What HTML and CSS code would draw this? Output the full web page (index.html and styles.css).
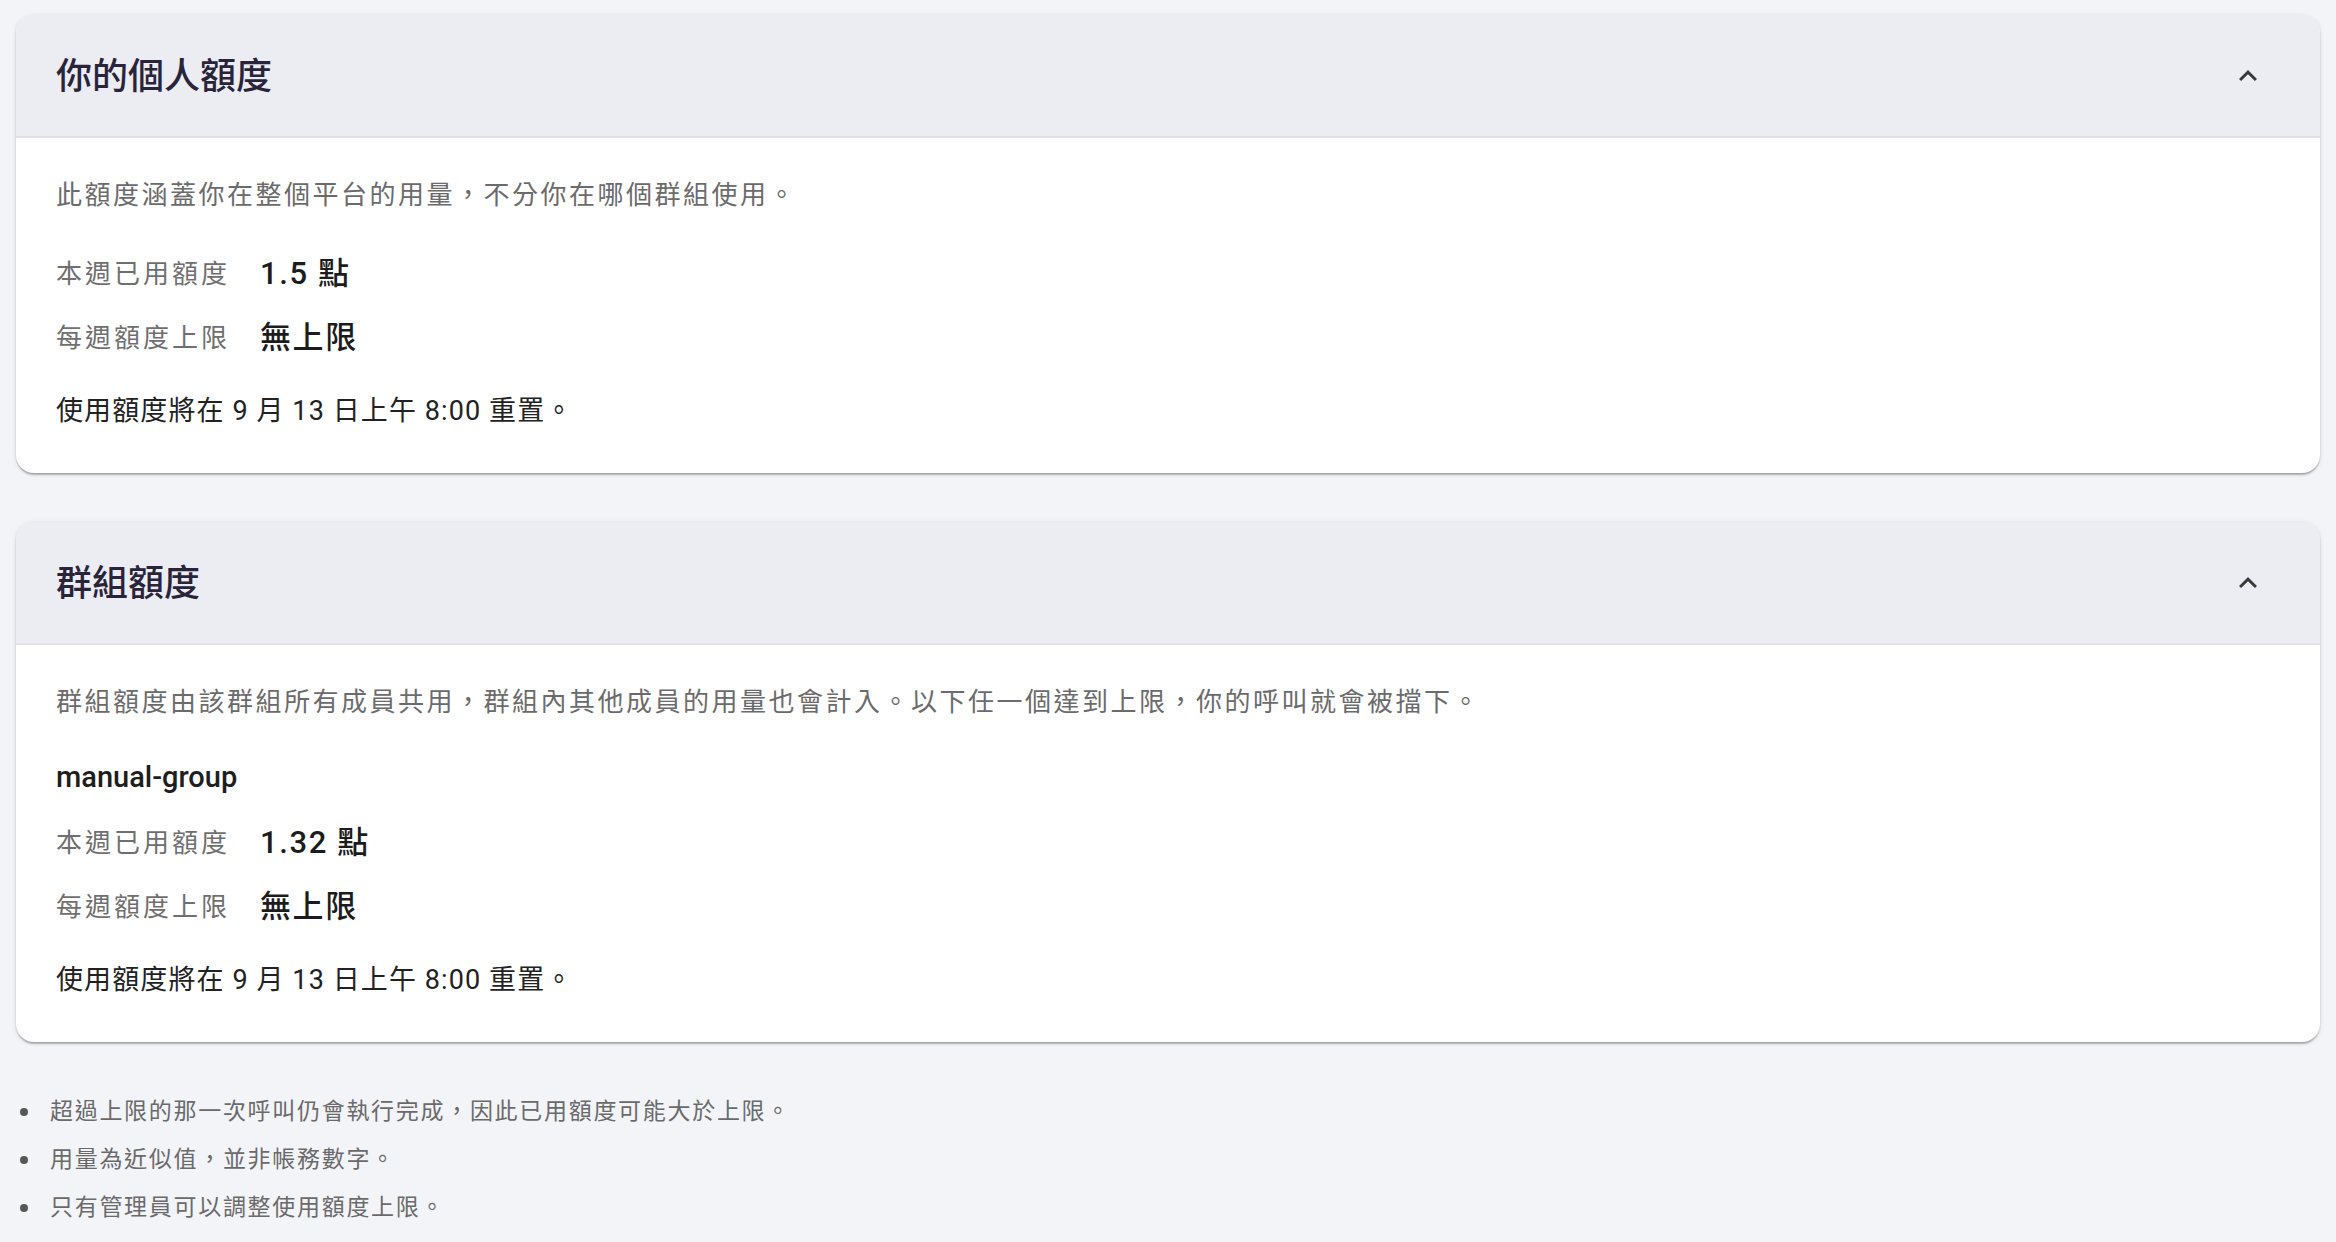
FILE: index.html
```html
<!DOCTYPE html>
<html>
<head>
  <title>額度</title>
  <link rel="stylesheet" href="styles.css">
</head>
<body>
  <!-- Personal quota -->
  <section class="quota-card">
    <div class="quota-header">
      <h2 class="quota-title">你的個人額度</h2>
      <svg class="chevron" viewBox="0 0 24 24"><path d="M12 8l-6 6 1.41 1.41L12 10.83l4.59 4.58L18 14z"/></svg>
    </div>
    <div class="quota-body">
      <p class="quota-desc">此額度涵蓋你在整個平台的用量，不分你在哪個群組使用。</p>
      <dl class="quota-stats">
        <dt>本週已用額度</dt>
        <dd>1.5 點</dd>
        <dt>每週額度上限</dt>
        <dd>無上限</dd>
      </dl>
      <p class="quota-reset">使用額度將在 9 月 13 日上午 8:00 重置。</p>
    </div>
  </section>

  <!-- Group quota -->
  <section class="quota-card">
    <div class="quota-header">
      <h2 class="quota-title">群組額度</h2>
      <svg class="chevron" viewBox="0 0 24 24"><path d="M12 8l-6 6 1.41 1.41L12 10.83l4.59 4.58L18 14z"/></svg>
    </div>
    <div class="quota-body">
      <p class="quota-desc">群組額度由該群組所有成員共用，群組內其他成員的用量也會計入。以下任一個達到上限，你的呼叫就會被擋下。</p>
      <div class="group-name">manual-group</div>
      <dl class="quota-stats">
        <dt>本週已用額度</dt>
        <dd>1.32 點</dd>
        <dt>每週額度上限</dt>
        <dd>無上限</dd>
      </dl>
      <p class="quota-reset">使用額度將在 9 月 13 日上午 8:00 重置。</p>
    </div>
  </section>

  <ul class="notes">
    <li>超過上限的那一次呼叫仍會執行完成，因此已用額度可能大於上限。</li>
    <li>用量為近似值，並非帳務數字。</li>
    <li>只有管理員可以調整使用額度上限。</li>
  </ul>
</body>
</html>
```

FILE: styles.css
```css
body {
  margin: 0;
  padding: 15px 16px 0;
  background-color: #f3f4f8;
  font-family: Roboto, "Noto Sans CJK TC", sans-serif;
  color: #222;
}

/* Cards */
.quota-card {
  background-color: #fff;
  border-radius: 18px;
  overflow: hidden;
  margin-bottom: 49px;
  box-shadow: 0 3px 2px -1px rgba(0, 0, 0, 0.2),
              0 1px 2px 0 rgba(0, 0, 0, 0.14),
              0 1px 5px 0 rgba(0, 0, 0, 0.1);
}

.quota-card:last-of-type {
  margin-bottom: 0;
}

.quota-header {
  display: flex;
  align-items: center;
  justify-content: space-between;
  height: 115px;
  padding: 0 54px 6px 40px;
  background-color: #ecedf3;
  border-bottom: 2px solid #e1e1e6;
}

.quota-title {
  margin: 0;
  font-size: 36px;
  font-weight: 500;
  color: #29243a;
}

.chevron {
  width: 36px;
  height: 36px;
  margin-top: 6px;
  fill: #3a3a3a;
}

.quota-body {
  padding: 39px 40px 44px;
}

.quota-desc {
  margin: 0 0 39px;
  font-size: 26px;
  line-height: 36px;
  letter-spacing: 2.5px;
  color: #6b6b6b;
}

.group-name {
  margin-bottom: 26px;
  font-size: 29px;
  line-height: 36px;
  font-weight: 500;
  color: #1e1e1e;
}

.quota-stats {
  display: grid;
  grid-template-columns: auto 1fr;
  column-gap: 30px;
  row-gap: 20px;
  margin: 0;
}

.quota-stats dt {
  font-size: 26px;
  line-height: 44px;
  letter-spacing: 3px;
  color: #6f6f6f;
}

.quota-stats dd {
  margin: 0;
  font-size: 31px;
  line-height: 44px;
  font-weight: 500;
  letter-spacing: 1.6px;
  color: #1c1c1c;
}

.quota-reset {
  margin: 33px 0 0;
  font-size: 27px;
  line-height: 36px;
  letter-spacing: 1.1px;
  color: #222;
}

/* Footnotes */
.notes {
  list-style: none;
  margin: 46px 0 0;
  padding: 0;
}

.notes li {
  display: flex;
  align-items: center;
  font-size: 23px;
  line-height: 48px;
  letter-spacing: 1.7px;
  color: #6a6a6a;
}

.notes li::before {
  content: "";
  width: 8px;
  height: 8px;
  margin: 0 22px 0 4px;
  border-radius: 50%;
  background-color: #555;
}
```
